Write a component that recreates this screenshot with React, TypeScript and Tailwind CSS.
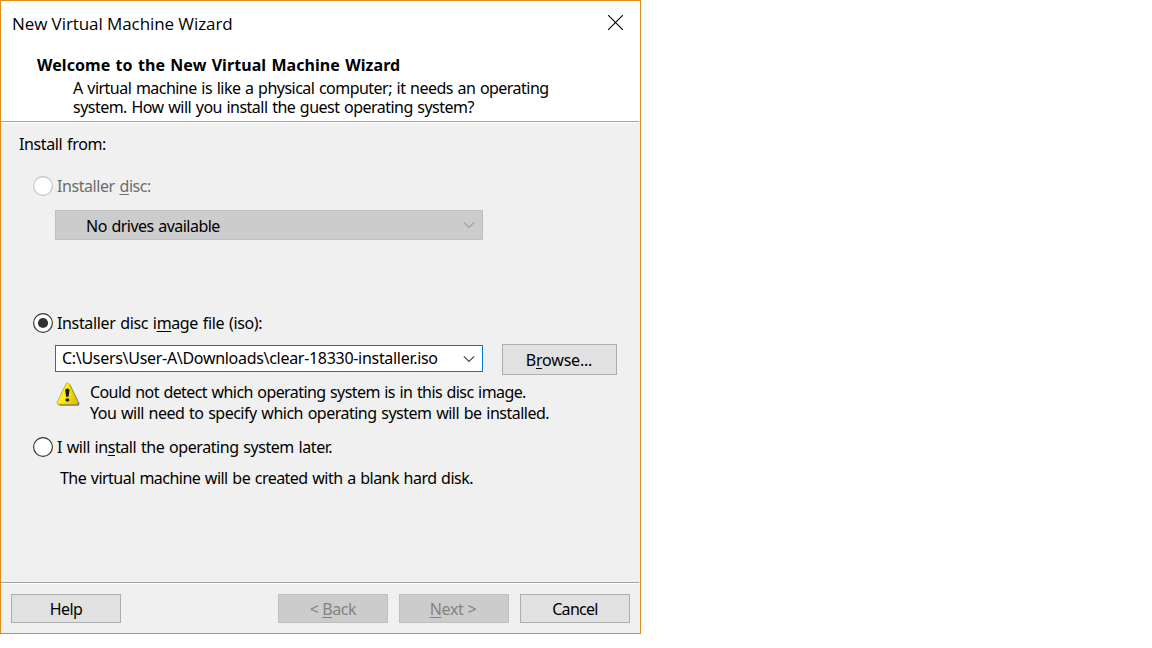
import type { ReactNode } from "react";

function Radio({ checked = false, disabled = false }: { checked?: boolean; disabled?: boolean }) {
  return (
    <svg width="20" height="20" viewBox="0 0 20 20" className="shrink-0">
      <circle cx="10" cy="10" r="9.4" fill="#fff" stroke={disabled ? "#c3c3c3" : "#333"} strokeWidth="1.15" />
      {checked && <circle cx="10" cy="10" r="5.1" fill="#333" />}
    </svg>
  );
}

function Chevron({ color }: { color: string }) {
  return (
    <svg width="12" height="8" viewBox="0 0 12 8" className="shrink-0">
      <path d="M0.8 1.4 L6 6.4 L11.2 1.4" fill="none" stroke={color} strokeWidth="1.2" />
    </svg>
  );
}

function WarningIcon() {
  return (
    <svg width="24" height="25" viewBox="0 0 24 25" className="shrink-0">
      <defs>
        <linearGradient id="warn" x1="0" y1="0" x2="1" y2="0.4">
          <stop offset="0" stopColor="#fff86a" />
          <stop offset="0.5" stopColor="#fff000" />
          <stop offset="1" stopColor="#e0c800" />
        </linearGradient>
      </defs>
      <path d="M12.5 2 Q14 2 15 4 L23.3 21 Q23.8 23.5 21.5 23.8 L4 23.8 L2 22.5 Z" fill="#55547c" opacity="0.8" />
      <path d="M11.5 1 Q12.8 1 13.7 3 L21.8 20 Q22.4 22.2 20.6 22.3 L2.4 22.3 Q0.4 22.2 1.3 20 L9.5 3 Q10.3 1 11.5 1 Z" fill="url(#warn)" stroke="#b6a51c" strokeWidth="0.8" />
      <path d="M9.1 8.2 Q9.2 6.5 11.3 6.5 Q13.4 6.5 13.5 8.2 L12.5 14.8 L10.2 14.8 Z" fill="#18183c" />
      <ellipse cx="11.4" cy="17.9" rx="2" ry="1.7" fill="#18183c" />
    </svg>
  );
}

function Button({ children, className, disabled = false }: { children: ReactNode; className: string; disabled?: boolean }) {
  return (
    <button
      disabled={disabled}
      className={`flex items-center justify-center border leading-5 whitespace-nowrap ${
        disabled ? "border-[#bfbfbf] bg-[#cccccc] text-[#838383]" : "border-[#adadad] bg-[#e1e1e1] text-black"
      } ${className}`}
    >
      <span>{children}</span>
    </button>
  );
}

function Key({ children }: { children: ReactNode }) {
  return <span className="underline decoration-1 underline-offset-2">{children}</span>;
}

export default function App() {
  return (
    <div className="h-[648px] w-[1152px] bg-white font-['Noto_Sans',sans-serif] text-[16px] leading-5 tracking-[-0.53px] [word-spacing:1px] whitespace-nowrap text-black">
      <div className="flex h-[634px] w-[641px] flex-col border border-[#e08a1a] bg-[#f0f0f0]">
        <header className="flex h-[120px] flex-col bg-white">
          <div className="flex h-[52px] items-start justify-between pt-[13px] pr-[17px] pl-[11px]">
            <h1 className="font-['Open_Sans',sans-serif] text-[17px] tracking-[-0.08px] [word-spacing:0px]">New Virtual Machine Wizard</h1>
            <svg width="15" height="15" viewBox="0 0 15 15" className="mt-px">
              <path d="M0 0 L15 15 M15 0 L0 15" stroke="#000" strokeWidth="1.1" />
            </svg>
          </div>
          <h2 className="mt-[2px] pl-[36px] font-bold tracking-[0.07px]">Welcome to the New Virtual Machine Wizard</h2>
          <p className="mt-[4px] pl-[72px] leading-[19px]">
            <span className="block">A virtual machine is like a physical computer; it needs an operating</span>
            <span className="block">system. How will you install the guest operating system?</span>
          </p>
        </header>
        <div className="mr-px h-[2px] shrink-0 border-t border-[#a0a0a0] bg-white" />

        <main className="flex h-[459px] flex-col pt-[11px]">
          <div className="pl-[18px] tracking-[-0.38px]">Install from:</div>
          <div className="mt-[22px] flex items-center gap-[4px] pl-[32px] tracking-[-0.43px] text-[#6d6d6d]">
            <Radio disabled />
            <span>Installer <Key>d</Key>isc:</span>
          </div>
          <div className="mt-[14px] ml-[54px] flex h-[30px] w-[428px] items-center justify-between border border-[#bfbfbf] bg-[#cccccc] pt-[2px] pr-[7px] pl-[30px]">
            <span>No drives available</span>
            <span className="-mt-[3px]"><Chevron color="#a0a0a0" /></span>
          </div>

          <div className="mt-[73px] flex items-center gap-[4px] pl-[32px] tracking-[-0.36px]">
            <Radio checked />
            <span>Installer disc i<Key>m</Key>age file (iso):</span>
          </div>
          <div className="mt-[11px] flex gap-[19px] pl-[54px]">
            <div className="mt-px flex h-[27px] w-[428px] items-center justify-between border border-[#0078d7] bg-white pr-[7px] pl-[6px]">
              <span className="-mt-[2px] tracking-[-0.3px]">C:\Users\User-A\Downloads\clear-18330-installer.iso</span>
              <Chevron color="#444" />
            </div>
            <Button className="h-[31px] w-[115px] pr-px tracking-[-0.2px]">B<Key>r</Key>owse...</Button>
          </div>
          <div className="mt-[7px] flex gap-[10px] pl-[55px] leading-[21px]">
            <WarningIcon />
            <p>
              <span className="block tracking-[-0.59px]">Could not detect which operating system is in this disc image.</span>
              <span className="block tracking-[-0.5px]">You will need to specify which operating system will be installed.</span>
            </p>
          </div>
          <div className="mt-[13px] flex items-center gap-[4px] pl-[32px] tracking-[-0.44px]">
            <Radio />
            <span>I will in<Key>s</Key>tall the operating system later.</span>
          </div>
          <div className="mt-[11px] pl-[59px]">The virtual machine will be created with a blank hard disk.</div>
        </main>

        <div className="mr-px h-[2px] shrink-0 border-t border-[#a0a0a0] bg-white" />
        <footer className="flex pt-[10px] pl-[10px]">
          <Button className="h-[29px] w-[110px]">Help</Button>
          <Button className="ml-[157px] h-[29px] w-[110px] tracking-[-0.4px]" disabled>&lt; <Key>B</Key>ack</Button>
          <Button className="ml-[11px] h-[29px] w-[110px] pr-[2px] tracking-[-0.3px]" disabled><Key>N</Key>ext &gt;</Button>
          <Button className="ml-[11px] h-[29px] w-[110px] tracking-[-0.7px]">Cancel</Button>
        </footer>
      </div>
    </div>
  );
}
